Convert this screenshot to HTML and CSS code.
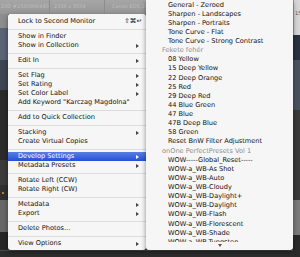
FILE: index.html
```html
<!DOCTYPE html>
<html>
<head>
<meta charset="utf-8">
<link rel="stylesheet" href="styles.css">
</head>
<body>
<div class="screen">
  <div class="main-col">
    <div class="infobar">
      <span class="info info-serial">20D #1530906440</span>
      <span class="info info-size">2336 x 3504</span>
      <span class="info info-cam">Canon EOS 20</span>
    </div>
    <div class="workspace">
      <div class="strip strip-left">
        <div class="blk l1"></div>
        <div class="blk l2"></div>
        <div class="blk l3"></div>
        <div class="blk l4"></div>
        <div class="blk l5"></div>
        <div class="blk l6"><span class="dot"></span></div>
        <div class="blk l7"></div>
        <div class="blk l8"></div>
      </div>
      <div class="center"></div>
    </div>
    <div class="footer"></div>
  </div>
  <div class="strip strip-right">
    <div class="blk r1"><span class="cell-num">15</span></div>
    <div class="blk r2"></div>
    <div class="blk r3"></div>
    <div class="blk r4"></div>
    <div class="blk r5"></div>
    <div class="blk r6"></div>
  </div>

  <ul class="menu context">
    <li class="item">Lock to Second Monitor<span class="shortcut">⇧⌘↵</span></li>
    <li class="sep"></li>
    <li class="item">Show in Finder</li>
    <li class="item has-sub">Show in Collection</li>
    <li class="sep"></li>
    <li class="item has-sub">Edit In</li>
    <li class="sep"></li>
    <li class="item has-sub">Set Flag</li>
    <li class="item has-sub">Set Rating</li>
    <li class="item has-sub">Set Color Label</li>
    <li class="item">Add Keyword "Karczag Magdolna"</li>
    <li class="sep"></li>
    <li class="item">Add to Quick Collection</li>
    <li class="sep"></li>
    <li class="item has-sub">Stacking</li>
    <li class="item">Create Virtual Copies</li>
    <li class="sep"></li>
    <li class="item has-sub active">Develop Settings</li>
    <li class="item has-sub">Metadata Presets</li>
    <li class="sep"></li>
    <li class="item">Rotate Left (CCW)</li>
    <li class="item">Rotate Right (CW)</li>
    <li class="sep"></li>
    <li class="item has-sub">Metadata</li>
    <li class="item has-sub">Export</li>
    <li class="sep"></li>
    <li class="item">Delete Photos...</li>
    <li class="sep"></li>
    <li class="item has-sub">View Options</li>
  </ul>

  <div class="menu submenu">
    <ul class="sublist">
      <li class="sub-item">General - Zeroed</li>
      <li class="sub-item">Sharpen - Landscapes</li>
      <li class="sub-item">Sharpen - Portraits</li>
      <li class="sub-item">Tone Curve - Flat</li>
      <li class="sub-item">Tone Curve - Strong Contrast</li>
      <li class="sub-item sub-head">Fekete fehér</li>
      <li class="sub-item">08 Yellow</li>
      <li class="sub-item">15 Deep Yellow</li>
      <li class="sub-item">22 Deep Orange</li>
      <li class="sub-item">25 Red</li>
      <li class="sub-item">29 Deep Red</li>
      <li class="sub-item">44 Blue Green</li>
      <li class="sub-item">47 Blue</li>
      <li class="sub-item">47B Deep Blue</li>
      <li class="sub-item">58 Green</li>
      <li class="sub-item">Reset BnW Filter Adjustment</li>
      <li class="sub-item sub-head">onOne PerfectPresets Vol 1</li>
      <li class="sub-item">WOW-----Global_Reset-----</li>
      <li class="sub-item">WOW-a_WB-As Shot</li>
      <li class="sub-item">WOW-a_WB-Auto</li>
      <li class="sub-item">WOW-a_WB-Cloudy</li>
      <li class="sub-item">WOW-a_WB-Daylight+</li>
      <li class="sub-item">WOW-a_WB-Daylight</li>
      <li class="sub-item">WOW-a_WB-Flash</li>
      <li class="sub-item">WOW-a_WB-Florescent</li>
      <li class="sub-item">WOW-a_WB-Shade</li>
      <li class="sub-item">WOW-a_WB-Tungsten</li>
    </ul>
    <div class="scroll-down"></div>
  </div>
</div>
</body>
</html>
```
FILE: styles.css
```css
* { box-sizing: border-box; }
html, body { margin: 0; padding: 0; }
body {
  width: 300px;
  height: 257px;
  overflow: hidden;
  background: #2e2e2e;
  font-family: "DejaVu Sans", "Noto Sans", sans-serif;
}
.screen {
  position: relative;
  width: 300px;
  height: 257px;
  display: flex;
}
.main-col {
  width: 293px;
  display: flex;
  flex-direction: column;
}
.infobar {
  height: 14px;
  display: flex;
  background: linear-gradient(#a6a6a6, #969696);
  color: #bdbdbd;
  font-size: 5px;
  line-height: 12px;
}
.info {
  white-space: nowrap;
  overflow: hidden;
  border-right: 1px solid #8c8c8c;
}
.info-serial { width: 50px; padding-left: 1px; }
.info-size { width: 55px; padding-left: 4px; }
.info-cam { flex: 1; padding-left: 7px; border-right: 0; }

.workspace { flex: 1; display: flex; }
.center { flex: 1; background: #3a3a3a; }
.strip { display: flex; flex-direction: column; }
.strip-left { width: 8px; }
.blk { position: relative; }
.l1 { height: 14px; background: #8d8d8d; }
.l2 { height: 32px; background: #5a6476; }
.l3 { height: 30px; background: #3d4553; }
.l4 { height: 70px; background: #2a2a2a; }
.l5 { height: 25px; background: #3b3b3b; }
.l6 { height: 15px; background: #303030; }
.l7 { height: 32px; background: #676767; }
.l8 { flex: 1; background: #262626; }
.dot {
  position: absolute;
  left: 2px;
  top: 7px;
  width: 2px;
  height: 2px;
  background: #c8772a;
}
.footer {
  height: 7px;
  background: #2c2c2c;
  border-top: 1px solid #4b4b4b;
}
.strip-right { width: 7px; }
.r1 { height: 35px; background: #d6d6d6; border-left: 1px solid #9a9a9a; }
.cell-num { font-size: 5px; color: #555; padding-left: 1px; line-height: 10px; }
.r2 { height: 25px; background: #2a3140; }
.r3 { height: 50px; background: #4a5260; }
.r4 { height: 90px; background: #3a3a3a; }
.r5 { height: 35px; background: #7a7a7a; }
.r6 { flex: 1; background: #2a2a2a; }

/* menus */
.menu {
  position: absolute;
  list-style: none;
  margin: 0;
  background: #f6f6f6;
  box-shadow: 0 2px 5px rgba(0, 0, 0, 0.45);
  font-size: 6.6px;
  color: #111;
}
.context {
  left: 8px;
  top: 14px;
  width: 138px;
  padding: 3px 0 2px;
  border-radius: 2px 2px 3px 3px;
}
.item {
  height: 9px;
  line-height: 9px;
  padding: 0 4px 0 10px;
  display: flex;
  justify-content: space-between;
  align-items: center;
  white-space: nowrap;
}
.shortcut { font-size: 6.6px; }
.sep {
  height: 6px;
  display: flex;
  align-items: center;
}
.sep::before {
  content: "";
  flex: 1;
  height: 1px;
  background: #dcdcdc;
}
.has-sub::after {
  content: "";
  border-left: 3px solid #444;
  border-top: 2.5px solid transparent;
  border-bottom: 2.5px solid transparent;
  margin-right: 3px;
}
.active {
  background: linear-gradient(#5b7fe6, #2250d6);
  color: #fff;
}
.active::after { border-left-color: #fff; }

.submenu {
  left: 146px;
  top: 0;
  width: 147px;
  height: 250px;
  padding: 0;
  border-radius: 0 0 3px 3px;
  display: flex;
  flex-direction: column;
}
.sublist {
  list-style: none;
  margin: 0;
  padding: 0.5px 0 0;
  height: 241.5px;
  overflow: hidden;
}
.sub-item {
  height: 9.125px;
  line-height: 9.125px;
  padding-left: 22px;
  white-space: nowrap;
}
.sub-head {
  padding-left: 16px;
  color: #8e8e8e;
}
.scroll-down {
  flex: 1;
  display: flex;
  justify-content: center;
  align-items: center;
}
.scroll-down::before {
  content: "";
  border-top: 3px solid #555;
  border-left: 2.5px solid transparent;
  border-right: 2.5px solid transparent;
}
```
